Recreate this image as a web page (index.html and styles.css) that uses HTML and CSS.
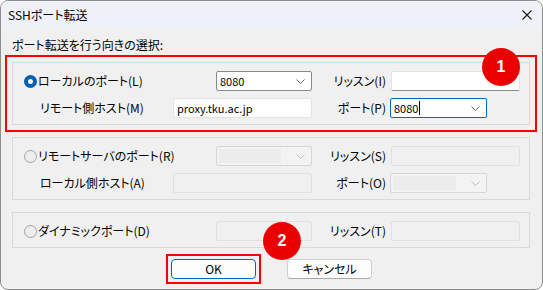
FILE: index.html
```html
<!DOCTYPE html>
<html lang="ja">
<head>
<meta charset="utf-8">
<title>SSHポート転送</title>
<link rel="stylesheet" href="styles.css">
</head>
<body>
<div class="window">
  <div class="titlebar">
    <span class="title">SSHポート転送</span>
    <svg class="close" width="10" height="10" viewBox="0 0 10 10"><path d="M0.5 0.5 L9.5 9.5 M9.5 0.5 L0.5 9.5" stroke="#1b1b1b" stroke-width="1.1" fill="none"/></svg>
  </div>
  <div class="body">
    <div class="caption">ポート転送を行う向きの選択:</div>

    <div class="group highlight">
      <div class="grid">
        <label class="radio-label"><span class="radio checked"></span>ローカルのポート(L)</label>
        <div class="combo col-c"><span class="val">8080</span><svg class="chev" width="9" height="5" viewBox="0 0 9 5"><path d="M0.5 0.5 L4.5 4.5 L8.5 0.5" stroke="#5f5f5f" fill="none"/></svg></div>
        <span class="rlabel">リッスン(I)</span>
        <div class="field listen"></div>

        <span class="sublabel">リモート側ホスト(M)</span>
        <div class="field host"><span class="val">proxy.tku.ac.jp</span></div>
        <span class="rlabel">ポート(P)</span>
        <div class="combo port focused"><span class="val">8080<span class="caret"></span></span><svg class="chev" width="9" height="5" viewBox="0 0 9 5"><path d="M0.5 0.5 L4.5 4.5 L8.5 0.5" stroke="#5f5f5f" fill="none"/></svg></div>
      </div>
    </div>

    <div class="group">
      <div class="grid">
        <label class="radio-label"><span class="radio"></span>リモートサーバのポート(R)</label>
        <div class="combo col-c disabled"><span class="inner"></span><svg class="chev" width="9" height="5" viewBox="0 0 9 5"><path d="M0.5 0.5 L4.5 4.5 L8.5 0.5" stroke="#bdbdbd" fill="none"/></svg></div>
        <span class="rlabel">リッスン(S)</span>
        <div class="field listen disabled"></div>

        <span class="sublabel">ローカル側ホスト(A)</span>
        <div class="field host disabled"></div>
        <span class="rlabel">ポート(O)</span>
        <div class="combo port disabled"><span class="inner"></span><svg class="chev" width="9" height="5" viewBox="0 0 9 5"><path d="M0.5 0.5 L4.5 4.5 L8.5 0.5" stroke="#bdbdbd" fill="none"/></svg></div>
      </div>
    </div>

    <div class="group">
      <div class="grid">
        <label class="radio-label"><span class="radio"></span>ダイナミックポート(D)</label>
        <div class="field col-c disabled"></div>
        <span class="rlabel">リッスン(T)</span>
        <div class="field listen disabled"></div>
      </div>
    </div>

    <div class="buttons">
      <span class="btn-highlight"><button class="btn default">OK</button></span>
      <button class="btn">キャンセル</button>
    </div>
  </div>

  <div class="badge badge-1">1</div>
  <div class="badge badge-2">2</div>
</div>
</body>
</html>
```
FILE: styles.css
```css
html, body {
  margin: 0;
  padding: 0;
  background: #ffffff;
}

body {
  font-family: "Noto Sans CJK JP", "Noto Sans", sans-serif;
  font-size: 12px;
  font-feature-settings: "palt";
  color: #000;
}

.window {
  position: relative;
  width: 543px;
  height: 290px;
  box-sizing: border-box;
  border: 1px solid #8e8e8e;
  border-radius: 8px;
  overflow: hidden;
  background: #f0f0f0;
}

.titlebar {
  height: 27px;
  background: #eef2f8;
  display: flex;
  align-items: center;
  justify-content: space-between;
  padding: 0 10px 0 7px;
}

.title {
  line-height: 16px;
  font-size: 12px;
}

.close {
  display: block;
}

.body {
  padding: 9px 11px 0 11px;
}

.caption {
  line-height: 16px;
}

.group {
  width: 518px;
  box-sizing: border-box;
  border: 1px solid #d9d9d9;
  padding: 8px 0 6px 11px;
  margin-top: 12px;
}

.caption + .group {
  margin-top: 9px;
}

.highlight {
  outline: 2px solid #ff0000;
  outline-offset: 5px;
}

.grid {
  display: grid;
  grid-template-columns: 149px 43px 96px 74px 4px 130px;
  grid-auto-rows: 20px;
  row-gap: 7px;
  align-items: center;
}

.radio-label {
  grid-column: 1 / 3;
  display: flex;
  align-items: center;
  gap: 1px;
  line-height: 16px;
  white-space: nowrap;
}

.radio {
  width: 13px;
  height: 13px;
  box-sizing: border-box;
  border-radius: 50%;
  border: 1px solid #a3a3a3;
  background: #ededed;
  flex: none;
}

.radio.checked {
  border: 4px solid #005fb8;
  background: #ffffff;
}

.sublabel {
  grid-column: 1 / 2;
  padding-left: 16px;
  line-height: 16px;
  white-space: nowrap;
}

.rlabel {
  grid-column: 4 / 5;
  text-align: right;
  line-height: 16px;
  white-space: nowrap;
}

.combo, .field {
  height: 20px;
  box-sizing: border-box;
  display: flex;
  align-items: center;
  justify-content: space-between;
  border-radius: 2px;
  background: #ffffff;
}

.val {
  padding-left: 3px;
  font-size: 11px;
  line-height: 16px;
  display: flex;
  align-items: center;
}

.combo {
  border: 1px solid #8a8a8a;
  padding-right: 6px;
}

.col-c {
  grid-column: 3 / 4;
}

.port {
  grid-column: 6 / 7;
  width: 97px;
}

.focused {
  border-color: #0067c0;
}

.caret {
  display: inline-block;
  width: 1px;
  height: 14px;
  background: #000;
  margin-left: 1px;
}

.field {
  border: 1px solid #e3e3e3;
}

.listen {
  grid-column: 6 / 7;
  margin-left: 1px;
  border-bottom-color: #8a8a8a;
}

.host {
  grid-column: 2 / 4;
}

.field.disabled {
  background: #f0f0f0;
  border-color: #e0e0e0;
}

.combo.disabled {
  background: #f3f3f3;
  border-color: #d6d6d6;
  padding-left: 2px;
}

.combo.disabled .inner {
  width: 72%;
  height: 14px;
  background: #ececec;
}

.buttons {
  display: flex;
  justify-content: center;
  gap: 31px;
  margin-top: 11px;
}

.btn-highlight {
  display: block;
  margin: -5px;
  padding: 3px;
  border: 2px solid #ff0000;
}

.btn {
  display: block;
  width: 85px;
  height: 20px;
  box-sizing: border-box;
  padding: 0;
  font: inherit;
  font-size: 12px;
  line-height: 16px;
  color: #000;
  background: #fdfdfd;
  border: 1px solid #d0d0d0;
  border-bottom-color: #a9a9a9;
  border-radius: 4px;
}

.btn.default {
  border: 1px solid #0067c0;
}

.badge {
  position: absolute;
  width: 38px;
  height: 38px;
  border-radius: 50%;
  background: #ea0000;
  color: #ffffff;
  font-family: "Liberation Sans", "Noto Sans", sans-serif;
  font-weight: bold;
  font-size: 16px;
  display: flex;
  align-items: center;
  justify-content: center;
}

.badge-1 {
  left: 481px;
  top: 47px;
}

.badge-2 {
  left: 262px;
  top: 221px;
}
```
